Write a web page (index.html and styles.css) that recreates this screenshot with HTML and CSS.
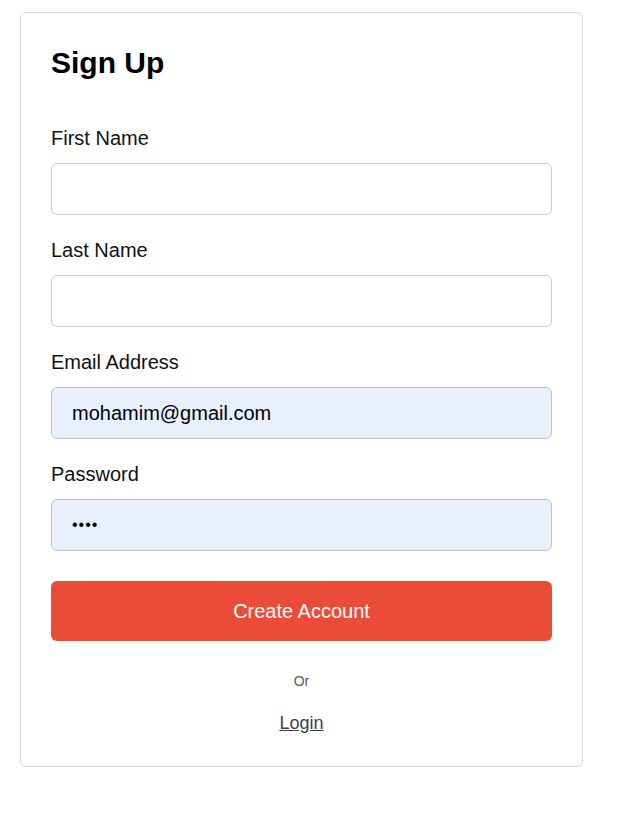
FILE: index.html
```html
<!DOCTYPE html>
<html lang="en">
<head>
<meta charset="utf-8">
<title>Sign Up</title>
<link rel="stylesheet" href="styles.css">
</head>
<body>
<div class="card">
  <h2 class="title">Sign Up</h2>
  <form class="form">
    <div class="field">
      <label class="label" for="fn">First Name</label>
      <input class="input" id="fn" type="text">
    </div>
    <div class="field">
      <label class="label" for="ln">Last Name</label>
      <input class="input" id="ln" type="text">
    </div>
    <div class="field">
      <label class="label" for="em">Email Address</label>
      <input class="input input-filled" id="em" type="email" value="mohamim@gmail.com">
    </div>
    <div class="field">
      <label class="label" for="pw">Password</label>
      <input class="input input-filled input-pw" id="pw" type="password" value="abcd">
    </div>
    <button class="btn" type="button">Create Account</button>
  </form>
  <p class="or">Or</p>
  <p class="login"><a class="login-link" href="#">Login</a></p>
</div>
</body>
</html>
```

FILE: styles.css
```css
* { box-sizing: border-box; }
html, body { background: #ffffff; }
body {
  margin: 0;
  padding: 12px 20px;
  font-family: "Liberation Sans", Arial, sans-serif;
  color: #000;
}
.card {
  width: 563px;
  border: 1px solid #d9d9d9;
  border-radius: 6px;
  padding: 32px 30px 32px;
  background: #fff;
}
.title {
  margin: 1px 0 0;
  font-size: 30px;
  line-height: 34px;
  font-weight: bold;
}
.form {
  margin-top: 47px;
  display: flex;
  flex-direction: column;
}
.field {
  display: flex;
  flex-direction: column;
  margin-bottom: 24px;
}
.label {
  font-size: 20px;
  line-height: 23px;
  margin-bottom: 13px;
  color: #111;
}
.input {
  height: 52px;
  width: 100%;
  border: 1px solid #cccccc;
  border-radius: 6px;
  padding: 0 20px;
  font-family: "Liberation Sans", Arial, sans-serif;
  font-size: 20px;
  color: #000;
  background: #fff;
  outline: none;
}
.input-filled {
  background: #e8f0fe;
  border-color: #bcc3cf;
}
.input-pw {
  font-size: 16px;
  letter-spacing: 1px;
}
.btn {
  margin-top: 6px;
  height: 60px;
  width: 100%;
  border: none;
  border-radius: 6px;
  background: #eb4b39;
  color: #fff;
  font-family: "Liberation Sans", Arial, sans-serif;
  font-size: 20px;
}
.or {
  margin: 32px 0 0;
  text-align: center;
  font-size: 14px;
  line-height: 16px;
  color: #5a5a5a;
}
.login {
  margin: 24px 0 0;
  text-align: center;
  font-size: 18px;
  line-height: 21px;
}
.login-link {
  color: #3c4149;
  text-decoration: underline;
}
```
